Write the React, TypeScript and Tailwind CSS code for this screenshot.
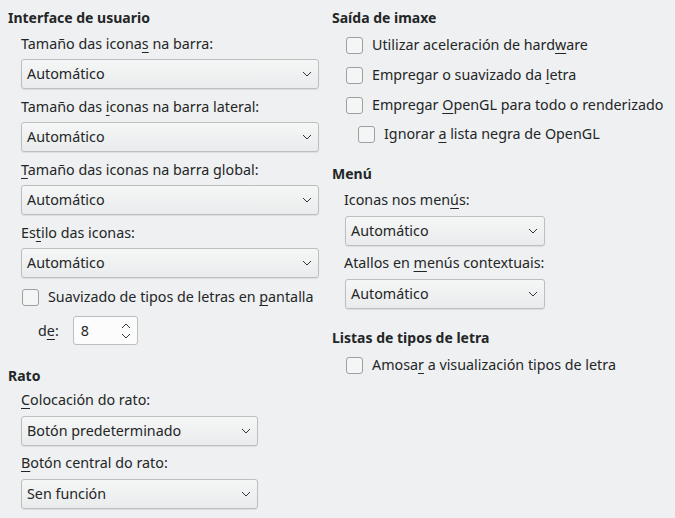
import type { ReactNode } from 'react'

const font = { fontFamily: '"Noto Sans", "Open Sans", sans-serif' }

function Chevron() {
  return (
    <svg width="10" height="6" viewBox="0 0 10 6" className="shrink-0">
      <path d="M1 1l4 4 4-4" fill="none" stroke="#31363b" strokeWidth="1" />
    </svg>
  )
}

function Combo({ value, width }: { value: string; width: string }) {
  return (
    <div
      className={`flex h-[30px] ${width} items-center justify-between rounded-[3px] border border-[#bcbebf] bg-gradient-to-b from-[#f5f6f6] to-[#eaebec] pl-[5px] pr-[6px] shadow-[0_1px_1px_rgba(0,0,0,0.08)]`}
    >
      <span>{value}</span>
      <Chevron />
    </div>
  )
}

function Check({ children, indent = 'pl-[14px]' }: { children: ReactNode; indent?: string }) {
  return (
    <div className={`flex h-[20px] items-center ${indent}`}>
      <span className="h-[17px] w-[17px] shrink-0 rounded-[3px] border border-[#9d9fa1] bg-[#f4f5f5]" />
      <span className="ml-[9px] whitespace-nowrap">{children}</span>
    </div>
  )
}

function U({ children }: { children: ReactNode }) {
  return <u className="underline-offset-[3px]">{children}</u>
}

function Heading({ children, className = '' }: { children: ReactNode; className?: string }) {
  return <div className={`text-[14px] font-bold ${className}`}>{children}</div>
}

export default function App() {
  return (
    <div
      className="flex h-[518px] w-[675px] bg-[#eff0f1] pl-[8px] pt-[8px] text-[14.3px] leading-[20px] text-[#232627]"
      style={font}
    >
      {/* left column */}
      <div className="flex w-[324px] shrink-0 flex-col">
        <Heading>Interface de usuario</Heading>
        <div className="mt-[6px] flex flex-col pl-[13px]">
          <div>
            Tamaño das icona<U>s</U> na barra:
          </div>
          <div className="mt-[5px]">
            <Combo value="Automático" width="w-[298px]" />
          </div>
          <div className="mt-[8px]">
            Tamaño das <U>i</U>conas na barra lateral:
          </div>
          <div className="mt-[5px]">
            <Combo value="Automático" width="w-[298px]" />
          </div>
          <div className="mt-[8px]">
            <U>T</U>amaño das iconas na barra global:
          </div>
          <div className="mt-[5px]">
            <Combo value="Automático" width="w-[298px]" />
          </div>
          <div className="mt-[8px]">
            Es<U>t</U>ilo das iconas:
          </div>
          <div className="mt-[5px]">
            <Combo value="Automático" width="w-[298px]" />
          </div>
          <div className="mt-[9px] -ml-[13px]">
            <Check>
              Suavizado de tipos de letras en <U>p</U>antalla
            </Check>
          </div>
          <div className="mt-[9px] flex items-center">
            <span className="ml-[17px]">
              d<U>e</U>:
            </span>
            <div className="ml-[14px] flex h-[29px] w-[65px] items-center justify-between rounded-[3px] border border-[#bcbebf] bg-[#fcfcfc] pl-[7px] pr-[6px]">
              <span>8</span>
              <svg width="10" height="18" viewBox="0 0 10 18">
                <path d="M1 6l4-4 4 4M1 12l4 4 4-4" fill="none" stroke="#31363b" strokeWidth="1" />
              </svg>
            </div>
          </div>
        </div>

        <Heading className="mt-[21px]">Rato</Heading>
        <div className="mt-[4px] flex flex-col pl-[13px]">
          <div>
            <U>C</U>olocación do rato:
          </div>
          <div className="mt-[6px]">
            <Combo value="Botón predeterminado" width="w-[237px]" />
          </div>
          <div className="mt-[7px]">
            <U>B</U>otón central do rato:
          </div>
          <div className="mt-[6px]">
            <Combo value="Sen función" width="w-[237px]" />
          </div>
        </div>
      </div>

      {/* right column */}
      <div className="flex flex-col">
        <Heading>Saída de imaxe</Heading>
        <div className="mt-[7px] flex flex-col gap-[10px]">
          <Check>
            Utilizar aceleración de hard<U>w</U>are
          </Check>
          <Check>
            Empregar o suavizado da <U>l</U>etra
          </Check>
          <Check>
            Empregar <U>O</U>penGL para todo o renderizado
          </Check>
        </div>
        <div className="mt-[9px]">
          <Check indent="pl-[26px]">
            Ignorar <U>a</U> lista negra de OpenGL
          </Check>
        </div>

        <Heading className="mt-[20px]">Menú</Heading>
        <div className="mt-[6px] flex flex-col pl-[12px]">
          <div>
            Iconas nos men<U>ú</U>s:
          </div>
          <div className="mt-[6px] pl-[1px]">
            <Combo value="Automático" width="w-[200px]" />
          </div>
          <div className="mt-[7px]">
            Atallos en <U>m</U>enús contextuais:
          </div>
          <div className="mt-[6px] pl-[1px]">
            <Combo value="Automático" width="w-[200px]" />
          </div>
        </div>

        <Heading className="mt-[19px]">Listas de tipos de letra</Heading>
        <div className="mt-[7px]">
          <Check>
            Amosa<U>r</U> a visualización tipos de letra
          </Check>
        </div>
      </div>
    </div>
  )
}
